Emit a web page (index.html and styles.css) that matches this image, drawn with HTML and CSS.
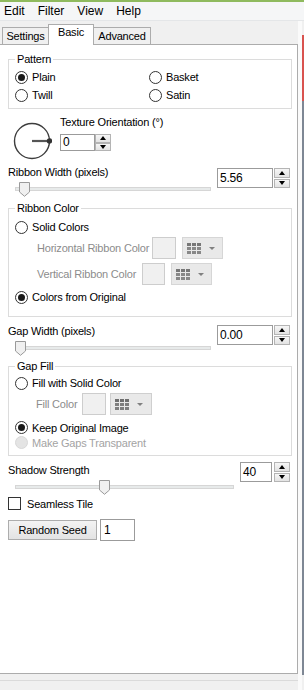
FILE: index.html
```html
<!DOCTYPE html>
<html>
<head>
    <title>Weave</title>
    <link rel="stylesheet" href="styles.css">
</head>
<body>
    <div class="titleline"></div>
    <div class="menubar">
        <span>Edit</span><span>Filter</span><span>View</span><span>Help</span>
    </div>
    <div class="window">
        <div class="main">
            <div class="tabs">
                <div class="tab tab-settings">Settings</div>
                <div class="tab tab-basic active">Basic</div>
                <div class="tab tab-advanced">Advanced</div>
            </div>
            <div class="panel">
                <fieldset class="group group-pattern">
                    <legend>Pattern</legend>
                    <div class="pattern">
                        <div class="opt"><span class="radio on"></span>Plain</div>
                        <div class="opt"><span class="radio"></span>Basket</div>
                        <div class="opt"><span class="radio"></span>Twill</div>
                        <div class="opt"><span class="radio"></span>Satin</div>
                    </div>
                </fieldset>

                <div class="orient">
                    <svg class="dial" width="40" height="40" viewBox="0 0 40 40">
                        <circle cx="20" cy="20" r="17.5" fill="none" stroke="#3d3d3d" stroke-width="1.4"/>
                        <line x1="20" y1="20" x2="37.5" y2="20" stroke="#555" stroke-width="2.2"/>
                        <circle cx="37.5" cy="20" r="2.7" fill="#333"/>
                    </svg>
                    <div class="orient-col">
                        <div class="lbl">Texture Orientation (°)</div>
                        <div class="spin small">
                            <div class="spin-box">0</div>
                            <div class="spin-btns"><span class="up"></span><span class="down"></span></div>
                        </div>
                    </div>
                </div>

                <div class="slider-row row-ribbon">
                    <div class="slider-col">
                        <div class="lbl">Ribbon Width (pixels)</div>
                        <div class="slider">
                            <div class="track"></div>
                            <svg class="thumb" style="left:4px" width="11" height="15" viewBox="0 0 11 15"><path d="M0.5 0.5H10.5V10L5.5 14.3L0.5 10Z" fill="#f0f0f0" stroke="#9a9a9a"/></svg>
                        </div>
                    </div>
                    <div class="spin">
                        <div class="spin-box">5.56</div>
                        <div class="spin-btns"><span class="up"></span><span class="down"></span></div>
                    </div>
                </div>

                <fieldset class="group group-ribbon">
                    <legend>Ribbon Color</legend>
                    <div class="opt"><span class="radio"></span>Solid Colors</div>
                    <div class="crow crow-h">
                        <span class="clabel">Horizontal Ribbon Color</span>
                        <span class="cbox"></span>
                        <span class="cdrop">
                            <svg width="14" height="11" viewBox="0 0 14 11"><rect x="0" y="0" width="4" height="3" fill="#777"/><rect x="5" y="0" width="4" height="3" fill="#777"/><rect x="10" y="0" width="4" height="3" fill="#777"/><rect x="0" y="4" width="4" height="3" fill="#888"/><rect x="5" y="4" width="4" height="3" fill="#888"/><rect x="10" y="4" width="4" height="3" fill="#888"/><rect x="0" y="8" width="4" height="3" fill="#888"/><rect x="5" y="8" width="4" height="3" fill="#888"/><rect x="10" y="8" width="4" height="3" fill="#888"/></svg>
                            <span class="arrow"></span>
                        </span>
                    </div>
                    <div class="crow crow-v">
                        <span class="clabel">Vertical Ribbon Color</span>
                        <span class="cbox"></span>
                        <span class="cdrop">
                            <svg width="14" height="11" viewBox="0 0 14 11"><rect x="0" y="0" width="4" height="3" fill="#777"/><rect x="5" y="0" width="4" height="3" fill="#777"/><rect x="10" y="0" width="4" height="3" fill="#777"/><rect x="0" y="4" width="4" height="3" fill="#888"/><rect x="5" y="4" width="4" height="3" fill="#888"/><rect x="10" y="4" width="4" height="3" fill="#888"/><rect x="0" y="8" width="4" height="3" fill="#888"/><rect x="5" y="8" width="4" height="3" fill="#888"/><rect x="10" y="8" width="4" height="3" fill="#888"/></svg>
                            <span class="arrow"></span>
                        </span>
                    </div>
                    <div class="opt opt-orig"><span class="radio on"></span>Colors from Original</div>
                </fieldset>

                <div class="slider-row row-gap">
                    <div class="slider-col">
                        <div class="lbl">Gap Width (pixels)</div>
                        <div class="slider">
                            <div class="track"></div>
                            <svg class="thumb" style="left:0px" width="11" height="15" viewBox="0 0 11 15"><path d="M0.5 0.5H10.5V10L5.5 14.3L0.5 10Z" fill="#f0f0f0" stroke="#9a9a9a"/></svg>
                        </div>
                    </div>
                    <div class="spin">
                        <div class="spin-box">0.00</div>
                        <div class="spin-btns"><span class="up"></span><span class="down"></span></div>
                    </div>
                </div>

                <fieldset class="group group-gap">
                    <legend>Gap Fill</legend>
                    <div class="opt"><span class="radio"></span>Fill with Solid Color</div>
                    <div class="crow crow-fill">
                        <span class="clabel">Fill Color</span>
                        <span class="cbox"></span>
                        <span class="cdrop">
                            <svg width="14" height="11" viewBox="0 0 14 11"><rect x="0" y="0" width="4" height="3" fill="#6f6f6f"/><rect x="5" y="0" width="4" height="3" fill="#6f6f6f"/><rect x="10" y="0" width="4" height="3" fill="#6f6f6f"/><rect x="0" y="4" width="4" height="3" fill="#7f7f7f"/><rect x="5" y="4" width="4" height="3" fill="#7f7f7f"/><rect x="10" y="4" width="4" height="3" fill="#7f7f7f"/><rect x="0" y="8" width="4" height="3" fill="#7f7f7f"/><rect x="5" y="8" width="4" height="3" fill="#7f7f7f"/><rect x="10" y="8" width="4" height="3" fill="#7f7f7f"/></svg>
                            <span class="arrow"></span>
                        </span>
                    </div>
                    <div class="opt tight opt-keep"><span class="radio on"></span>Keep Original Image</div>
                    <div class="opt tight dis"><span class="radio disabled"></span>Make Gaps Transparent</div>
                </fieldset>

                <div class="slider-row row-shadow">
                    <div class="slider-col">
                        <div class="lbl">Shadow Strength</div>
                        <div class="slider long">
                            <div class="track"></div>
                            <svg class="thumb" style="left:84px" width="11" height="15" viewBox="0 0 11 15"><path d="M0.5 0.5H10.5V10L5.5 14.3L0.5 10Z" fill="#f0f0f0" stroke="#9a9a9a"/></svg>
                        </div>
                    </div>
                    <div class="spin narrow">
                        <div class="spin-box">40</div>
                        <div class="spin-btns"><span class="up"></span><span class="down"></span></div>
                    </div>
                </div>

                <div class="check-row"><span class="check"></span>Seamless Tile</div>

                <div class="seed">
                    <button type="button" class="btn">Random Seed</button>
                    <div class="seedbox">1</div>
                </div>
            </div>
            <div class="footer"></div>
        </div>
        <div class="strip"></div>
    </div>
</body>
</html>
```

FILE: styles.css
```css
* {
    box-sizing: border-box;
}
body {
    margin: 0;
    width: 304px;
    height: 690px;
    overflow: hidden;
    font-family: "Liberation Sans", Arial, sans-serif;
    font-size: 11px;
    letter-spacing: -0.2px;
    color: #000;
    background: #f0f0f0;
}
.titleline {
    height: 2px;
    background: #8fba5e;
}
.menubar {
    height: 19px;
    display: flex;
    gap: 13px;
    padding-left: 4px;
    background: #f5f6f7;
    border-bottom: 1px solid #e4e6e8;
    font-size: 12px;
    letter-spacing: 0;
    line-height: 18px;
}
.window {
    display: flex;
    height: 669px;
}
.main {
    width: 298px;
}
.strip {
    width: 6px;
    background:
        linear-gradient(#fafafa, #fafafa) left top / 4px 100% no-repeat,
        linear-gradient(to bottom, #f0f0f0 0 14px, #d9534f 14px 80px, #7e8794 80px 654px, #f0f0f0 654px) right top / 2px 100% no-repeat;
}

/* tabs */
.tabs {
    display: flex;
    align-items: flex-end;
    height: 20px;
    margin-top: 3px;
    padding-left: 2px;
}
.tab {
    height: 17px;
    padding-top: 1px;
    margin-left: -1px;
    border: 1px solid #acacac;
    border-bottom: none;
    background: #f0f0f0;
    text-align: center;
    line-height: 14px;
}
.tab:first-child {
    margin-left: 0;
}
.tab-settings { width: 47px; }
.tab-basic { width: 46px; }
.tab-advanced { width: 58px; }
.tab.active {
    position: relative;
    height: 21px;
    margin-bottom: -1px;
    padding-top: 0;
    background: #fff;
}

.panel {
    width: 299px;
    height: 630px;
    margin-left: -1px;
    padding: 0 5px 0 8px;
    background: #fff;
    border: 1px solid #acacac;
}
.footer {
    margin-top: 6px;
    border-top: 1px solid #dadada;
}

/* group boxes */
.group {
    margin: 0;
    min-width: 0;
    border: 1px solid #dcdcdc;
    padding: 0 6px;
}
.group legend {
    padding: 0 2px;
    line-height: 13px;
}
.group-pattern {
    margin-top: 8px;
    padding-top: 2px;
    padding-bottom: 4px;
}
.group-ribbon {
    margin-top: 6px;
    padding-top: 3px;
    padding-bottom: 10px;
}
.group-gap {
    margin-top: 5px;
    padding-top: 1px;
    padding-bottom: 5px;
}
.pattern {
    display: grid;
    grid-template-columns: 134px 1fr;
    grid-auto-rows: 18px;
}
.opt {
    display: flex;
    align-items: center;
    height: 18px;
}
.opt.tight {
    height: 15px;
}
.opt-orig {
    margin-top: 3px;
}
.opt-keep {
    margin-top: 5px;
}
.dis {
    color: #a3a3a3;
}
.radio {
    flex: none;
    display: flex;
    align-items: center;
    justify-content: center;
    width: 13px;
    height: 13px;
    margin-right: 4px;
    border: 1px solid #333;
    border-radius: 50%;
    background: #fff;
}
.radio.on::after {
    content: "";
    width: 7px;
    height: 7px;
    border-radius: 50%;
    background: #1a1a1a;
}
.radio.disabled {
    background: #e4e4e4;
    border-color: #d8d8d8;
}

/* colour pickers */
.crow {
    display: flex;
    align-items: center;
    height: 22px;
    margin-left: 22px;
    color: #8c8c8c;
}
.crow-h {
    margin-top: 1px;
}
.crow-v {
    margin-top: 4px;
}
.crow-fill {
    margin-top: 1px;
    margin-left: 21px;
}
.clabel {
    white-space: nowrap;
}
.crow-h .clabel { width: 115px; }
.crow-v .clabel { width: 105px; }
.crow-fill .clabel { width: 46px; }
.cbox {
    width: 24px;
    height: 22px;
    margin-right: 6px;
    border: 1px solid #cdcdcd;
    background: #f0f0f0;
}
.crow-v .cbox {
    width: 23px;
}
.crow-fill .cbox {
    margin-right: 4px;
}
.cdrop {
    display: flex;
    align-items: center;
    width: 41px;
    height: 22px;
    padding-left: 4px;
    border: 1px solid #d6d6d6;
    background: #e9e9e9;
}
.crow-fill .cdrop {
    width: 42px;
    border-color: #cfcfcf;
}
.arrow {
    margin-left: 8px;
    border-left: 3px solid transparent;
    border-right: 3px solid transparent;
    border-top: 3px solid #808080;
}

/* orientation */
.orient {
    display: flex;
    margin-top: 7px;
}
.dial {
    margin: 5px 0 0 4px;
}
.orient-col {
    margin-left: 8px;
}
.lbl {
    line-height: 13px;
    white-space: nowrap;
}
.orient-col .spin {
    margin-top: 5px;
}

/* spinners */
.spin {
    display: flex;
    gap: 1px;
    height: 20px;
    margin-right: 2px;
}
.spin-box {
    width: 56px;
    padding-left: 2px;
    border: 1px solid #9b9b9b;
    background: #fff;
    font-size: 12px;
    line-height: 18px;
}
.spin-btns {
    display: flex;
    flex-direction: column;
    gap: 1px;
    width: 16px;
}
.spin-btns span {
    flex: 1;
    display: flex;
    align-items: center;
    justify-content: center;
    border: 1px solid #b4b4b4;
    background: linear-gradient(#f6f6f6, #e3e3e3);
}
.spin-btns .up::after {
    content: "";
    border-left: 3.5px solid transparent;
    border-right: 3.5px solid transparent;
    border-bottom: 4px solid #000;
}
.spin-btns .down::after {
    content: "";
    border-left: 3.5px solid transparent;
    border-right: 3.5px solid transparent;
    border-top: 4px solid #000;
}
.spin.small {
    height: 17px;
    gap: 0;
}
.spin.small .spin-box {
    width: 35px;
    line-height: 15px;
}
.spin.small .spin-btns {
    gap: 0;
}
.spin.narrow {
    gap: 2px;
}
.spin.narrow .spin-box {
    width: 32px;
}

/* sliders */
.slider-row {
    display: flex;
    justify-content: space-between;
    align-items: flex-start;
}
.row-ribbon {
    margin-top: 5px;
}
.row-ribbon .spin {
    margin-top: 2px;
}
.row-gap {
    margin-top: 8px;
}
.row-shadow {
    margin-top: 8px;
}
.row-shadow .spin {
    margin-top: -2px;
}
.slider {
    position: relative;
    width: 196px;
    height: 15px;
    margin: 2px 0 0 7px;
    padding-top: 6px;
}
.slider.long {
    width: 219px;
}
.track {
    height: 4px;
    border: 1px solid #d6d6d6;
    background: #e7eaea;
}
.thumb {
    position: absolute;
    top: 1px;
}

/* bottom controls */
.check-row {
    display: flex;
    align-items: center;
    height: 15px;
    margin-top: 2px;
}
.check {
    width: 13px;
    height: 13px;
    margin-right: 6px;
    border: 1px solid #333;
    background: #fff;
}
.seed {
    display: flex;
    align-items: center;
    gap: 3px;
    height: 22px;
    margin-top: 8px;
}
.btn {
    width: 89px;
    height: 20px;
    padding: 0;
    border: 1px solid #adadad;
    background: linear-gradient(#f3f3f3, #e3e3e3);
    font-family: inherit;
    font-size: 11px;
    letter-spacing: -0.2px;
    color: #000;
}
.seedbox {
    width: 35px;
    height: 22px;
    padding-left: 3px;
    border: 1px solid #9b9b9b;
    background: #fff;
    font-size: 12px;
    line-height: 20px;
}
```
